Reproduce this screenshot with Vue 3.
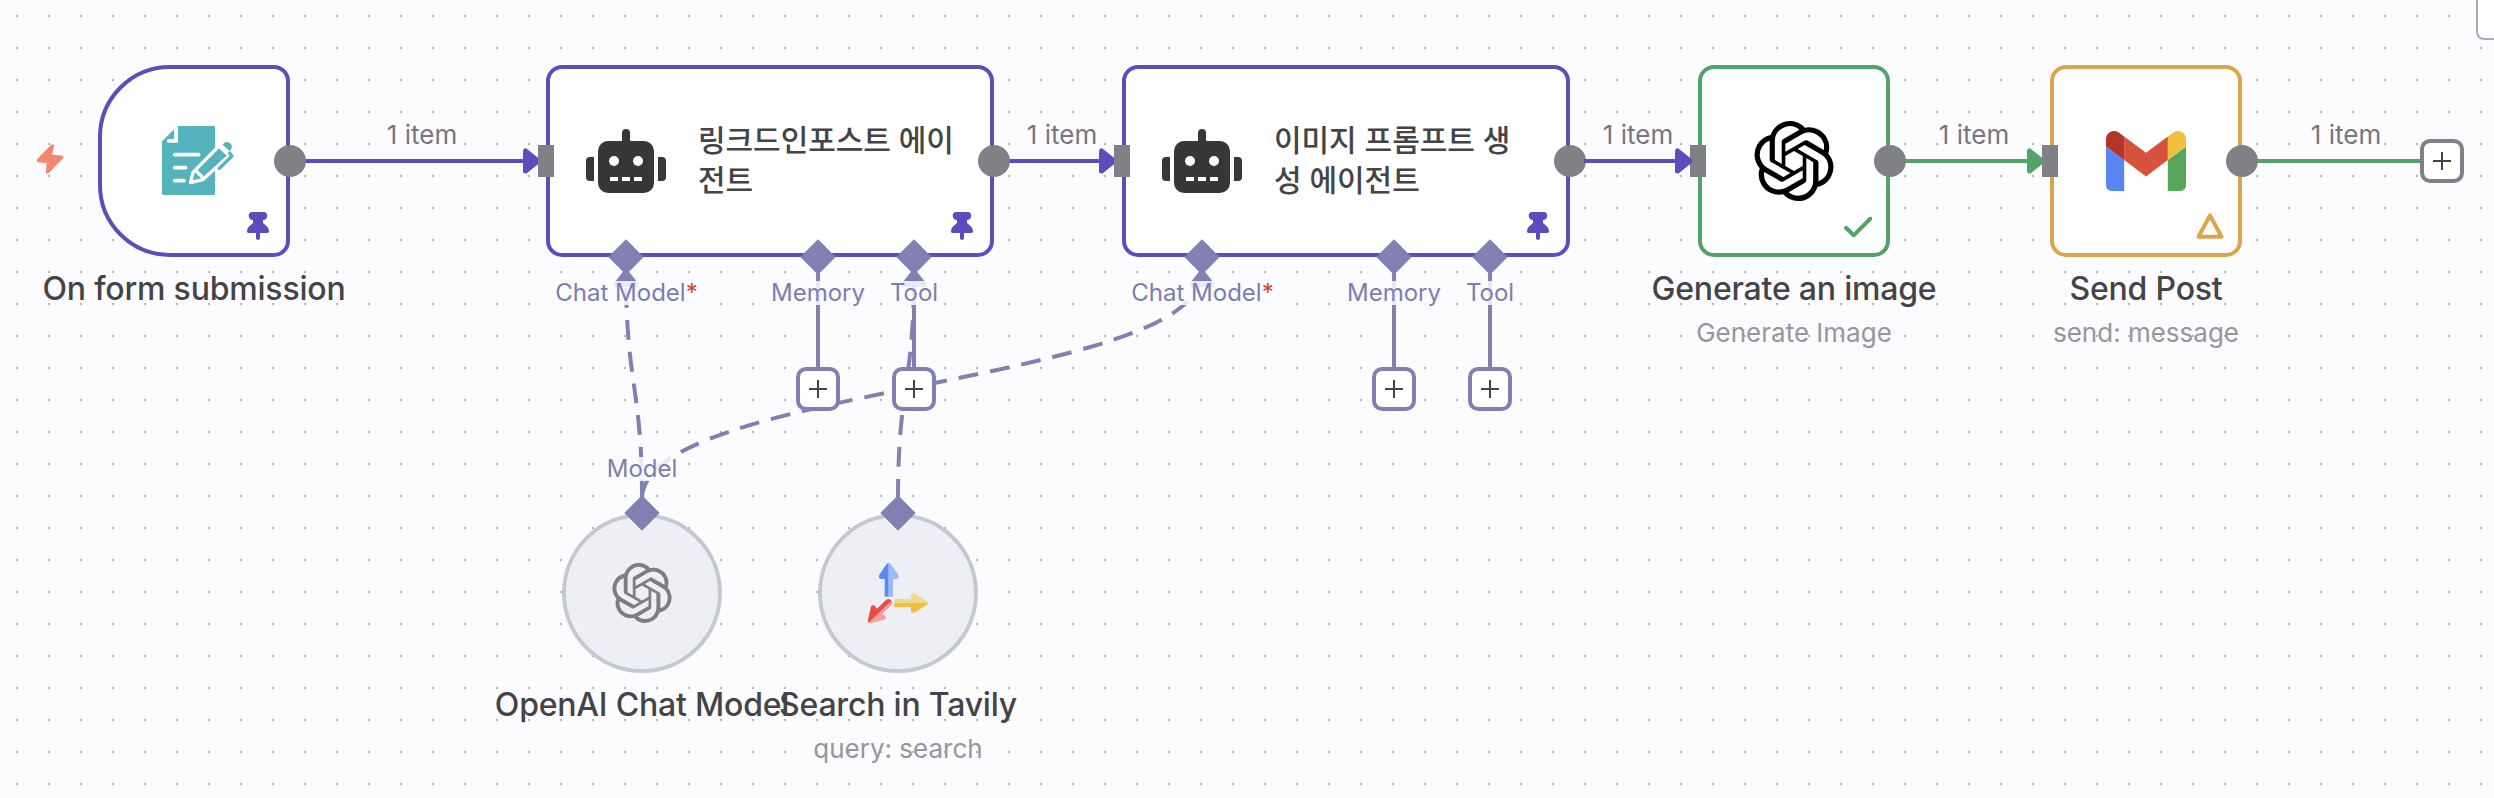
<script setup>
const logo =
  'M22.2819 9.8211a5.9847 5.9847 0 0 0-.5157-4.9108 6.0462 6.0462 0 0 0-6.5098-2.9A6.0651 6.0651 0 0 0 4.9807 4.1818a5.9847 5.9847 0 0 0-3.9977 2.9 6.0462 6.0462 0 0 0 .7427 7.0966 5.98 5.98 0 0 0 .511 4.9107 6.051 6.051 0 0 0 6.5146 2.9001A5.9847 5.9847 0 0 0 13.2599 24a6.0557 6.0557 0 0 0 5.7718-4.2058 5.9894 5.9894 0 0 0 3.9977-2.9001 6.0557 6.0557 0 0 0-.7475-7.0729zm-9.022 12.6081a4.4755 4.4755 0 0 1-2.8764-1.0408l.1419-.0804 4.7783-2.7582a.7948.7948 0 0 0 .3927-.6813v-6.7369l2.02 1.1686a.071.071 0 0 1 .038.052v5.5826a4.504 4.504 0 0 1-4.4945 4.4944zm-9.6607-4.1254a4.4708 4.4708 0 0 1-.5346-3.0137l.142.0852 4.783 2.7582a.7712.7712 0 0 0 .7806 0l5.8428-3.3685v2.3324a.0804.0804 0 0 1-.0332.0615L9.74 19.9502a4.4992 4.4992 0 0 1-6.1408-1.6464zM2.3408 7.8956a4.485 4.485 0 0 1 2.3655-1.9728V11.6a.7664.7664 0 0 0 .3879.6765l5.8144 3.3543-2.0201 1.1685a.0757.0757 0 0 1-.071 0l-4.8303-2.7865A4.504 4.504 0 0 1 2.3408 7.872zm16.5963 3.8558L13.1038 8.364 15.1192 7.2a.0757.0757 0 0 1 .071 0l4.8303 2.7913a4.4944 4.4944 0 0 1-.6765 8.1042v-5.6772a.79.79 0 0 0-.407-.667zm2.0107-3.0231l-.142-.0852-4.7735-2.7818a.7759.7759 0 0 0-.7854 0L9.409 9.2297V6.8974a.0662.0662 0 0 1 .0284-.0615l4.8303-2.7866a4.4992 4.4992 0 0 1 6.6802 4.66zM8.3065 12.863l-2.02-1.1638a.0804.0804 0 0 1-.038-.0567V6.0742a4.4992 4.4992 0 0 1 7.3757-3.4537l-.142.0805L8.704 5.459a.7948.7948 0 0 0-.3927.6813zm1.0976-2.3654l2.602-1.4998 2.6069 1.4998v2.9994l-2.5974 1.4997-2.6067-1.4997Z'

const edges = [
  { from: 290, to: 538, tone: 'pinned', label: 422 },
  { from: 994, to: 1114, tone: 'pinned', label: 1062 },
  { from: 1570, to: 1690, tone: 'pinned', label: 1638 },
  { from: 1890, to: 2042, tone: 'success', label: 1974 },
  { from: 2242, to: 2420, tone: 'success', label: 2346, open: true },
]

const agents = [
  { x: 546, lines: ['링크드인포스트 에이', '전트'] },
  { x: 1122, lines: ['이미지 프롬프트 생', '성 에이전트'] },
]

const links = [
  { from: 642, to: 626 },
  { from: 642, to: 1202 },
  { from: 898, to: 914 },
]
const linkPath = (l) => `M${l.from} 499C${l.from} 385.5 ${l.to} 385.5 ${l.to} 272`

const slots = [
  { dx: 272, name: 'Memory' },
  { dx: 368, name: 'Tool' },
]

const captions = [
  { x: 194, y: 269, title: 'On form submission' },
  { x: 1794, y: 269, title: 'Generate an image', sub: 'Generate Image' },
  { x: 2146, y: 269, title: 'Send Post', sub: 'send: message' },
  { x: 642, y: 685, title: 'OpenAI Chat Model' },
  { x: 898, y: 685, title: 'Search in Tavily', sub: 'query: search' },
]

const outputs = [290, 994, 1570, 1890, 2242]
const inputs = [538, 1114, 1690, 2042]
const diamonds = [
  [626, 257], [818, 257], [914, 257],
  [1202, 257], [1394, 257], [1490, 257],
  [642, 513], [898, 513],
]
</script>

<template>
  <main class="canvas">
    <svg class="layer" width="2494" height="798">
      <g v-for="e in edges" :key="e.from" :class="e.tone">
        <path class="line" :d="`M${e.from} 161H${e.to}`" />
      </g>
      <path v-for="l in links" :key="l.to" class="link" :d="linkPath(l)" />
      <g v-for="a in agents" :key="a.x">
        <path v-for="s in slots" :key="s.dx" class="stem" :d="`M${a.x + s.dx} 257V368`" />
      </g>
      <path
        v-for="l in links"
        :key="'h' + l.to"
        class="link-head"
        :d="`M${l.to} 272l-10 12.5h20z`"
      />
    </svg>

    <section class="node trigger pinned">
      <svg class="form-icon" viewBox="0 0 300 300" width="100" height="100">
        <path
          class="teal"
          d="M84 48H191a4 4 0 0 1 4 4V250a5 5 0 0 1-5 5H41a5 5 0 0 1-5-5V94L72 58V87H56a5.5 5.5 0 0 0 0 11H84Z"
        />
        <path class="rule" d="M74 134H146M74 173H107M74 212H102" />
        <path class="pencil" d="M122 218L129 187L207 108L237 137L158 209Z" />
        <path class="nib" d="M137 182L155 199" />
        <path class="teal" d="M218 104C226 92 238 95 243 103C248 111 245 118 239 123Z" />
        <path class="clip" d="M239 129L246 138L208 175" />
      </svg>
    </section>

    <section
      v-for="a in agents"
      :key="a.x"
      class="node agent pinned"
      :style="{ left: a.x + 'px' }"
    >
      <svg class="robot" viewBox="0 0 80 64" width="80" height="64">
        <path
          d="M36 12V4a4 4 0 0 1 8 0V12H58a10 10 0 0 1 10 10V54a10 10 0 0 1-10 10H22a10 10 0 0 1-10-10V22a10 10 0 0 1 10-10ZM8 28V52H4a4 4 0 0 1-4-4V32a4 4 0 0 1 4-4ZM72 28h4a4 4 0 0 1 4 4V48a4 4 0 0 1-4 4H72Z"
        />
        <g class="face">
          <circle cx="28" cy="32" r="5" />
          <circle cx="52" cy="32" r="5" />
          <path d="M24 48h8v4h-8zM36 48h8v4h-8zM48 48h8v4h-8z" />
        </g>
      </svg>
      <div class="agent-title">
        <div v-for="t in a.lines" :key="t">{{ t }}</div>
      </div>
    </section>

    <section class="node image success">
      <svg viewBox="0 0 24 24" width="80" height="80"><path :d="logo" /></svg>
      <svg class="status" viewBox="0 0 28 20" width="28" height="20">
        <path d="M2 10.8L9.7 18.3L26.5 1.5" />
      </svg>
    </section>

    <section class="node mail warning">
      <svg viewBox="52 42 88 66" width="80" height="60">
        <path fill="#5985f0" d="M58 108h14V74L52 59v43c0 3.32 2.69 6 6 6" />
        <path fill="#5aa55c" d="M120 108h14c3.32 0 6-2.69 6-6V59l-20 15" />
        <path fill="#efbf3d" d="M120 48v26l20-15v-8c0-7.42-8.47-11.65-14.4-7.2" />
        <path fill="#d6523c" d="M72 74V48l24 18 24-18v26L96 92" />
        <path fill="#b33528" d="M52 51v8l20 15V48l-5.6-4.2c-5.94-4.45-14.4-.22-14.4 7.2" />
      </svg>
      <svg class="status" viewBox="0 0 28 26" width="28" height="26">
        <path d="M14 2.4L25.5 23.7H2.5Z" />
      </svg>
    </section>

    <section class="node round openai">
      <svg viewBox="0 0 24 24" width="60" height="60"><path fill="#7d7e82" :d="logo" /></svg>
    </section>
    <section class="node round tavily">
      <svg class="tavily-icon" viewBox="0 0 330 300" width="110" height="100">
        <path fill="#5b88fa" d="M146 68Q141 69 138 74L119 103Q112 116 124 117H134V170H146Z" />
        <path fill="#9cbaf7" d="M146 68Q151 69 154 74L174 103Q180 116 168 117H159V170H146Z" />
        <path fill="#f0d88c" d="M163 189V177H213V167Q215 156 225 161L260 183Q264 186 264 189Z" />
        <path fill="#f0be3c" d="M163 189V201H213V211Q215 222 225 217L260 195Q264 192 264 189Z" />
        <path fill="#ea4c3f" d="M155 183L86 248Q82 245 84 240L93 200Q98 191 105 199L111 206L138 180Q148 172 155 183Z" />
        <path fill="#f2a09f" d="M155 183L86 248Q92 250 97 248L132 239Q143 233 135 227L127 221L154 196Q161 189 155 183Z" />
      </svg>
    </section>

    <svg class="layer" width="2494" height="798">
      <g v-for="x in [258, 962, 1538]" :key="x" :transform="`translate(${x - 11} 212)`">
        <path
          class="pin"
          d="M5 0H17C21.5 0 21.5 8 16 8V11C18 13 22 15 22 19.5Q22 21 20 21H13V26.5Q11 29.5 9 26.5V21H2Q0 21 0 19.5C0 15 4 13 6 11V8C.5 8 .5 0 5 0Z"
        />
      </g>
      <path class="bolt" d="M52.3 146L38.3 160.5L48.5 161.8L47.5 171.8L61.6 157.2L50 156.2Z" />
      <circle v-for="x in outputs" :key="x" class="port" :cx="x" cy="161" r="16" />
      <rect class="port" x="1690" y="145" width="16" height="32" />
      <template v-for="e in edges" :key="e.to">
        <path
          v-if="!e.open"
          :class="['head', e.tone]"
          :d="`M${e.to} 161l-12.5-10v20z`"
        />
      </template>
      <rect
        v-for="x in inputs.filter((v) => v !== 1690)"
        :key="x"
        class="port"
        :x="x"
        y="145"
        width="16"
        height="32"
      />
      <path class="over" d="M1584 161H1600" />
      <path
        v-for="d in diamonds"
        :key="d.join()"
        class="diamond"
        :d="`M${d[0]} ${d[1] - 17.7}l17.7 17.7l-17.7 17.7l-17.7-17.7z`"
      />
    </svg>

    <template v-for="a in agents" :key="'l' + a.x">
      <span class="slot-label" :style="{ left: a.x + 80.5 + 'px' }">Chat Model<i>*</i></span>
      <span
        v-for="s in slots"
        :key="s.name"
        class="slot-label"
        :style="{ left: a.x + s.dx + 'px' }"
      >{{ s.name }}</span>
      <button
        v-for="s in slots"
        :key="'b' + s.name"
        class="plus slot-plus"
        :style="{ left: a.x + s.dx - 22 + 'px' }"
      ></button>
    </template>
    <span class="slot-label model">Model</span>
    <button class="plus end-plus"></button>

    <span
      v-for="e in edges"
      :key="'t' + e.from"
      class="edge-label"
      :style="{ left: e.label + 'px' }"
    >1 item</span>

    <div
      v-for="c in captions"
      :key="c.title"
      class="caption"
      :style="{ left: c.x + 'px', top: c.y + 'px' }"
    >
      <div class="title">{{ c.title }}</div>
      <div v-if="c.sub" class="sub">{{ c.sub }}</div>
    </div>

    <div class="control"></div>
  </main>
</template>

<style scoped>
.canvas {
  position: relative;
  width: 2494px;
  height: 798px;
  overflow: hidden;
  font-family: Inter, 'Noto Sans CJK KR', sans-serif;
  background: conic-gradient(from 90deg at 30px 30px, #b2b2b7 90deg, #fcfcff 0) -14px -15px / 32px 32px;
}
.layer {
  position: absolute;
  inset: 0;
}
.pinned { --tone: #5c4dbd; }
.success { --tone: #52a36a; }
.warning { --tone: #dca54c; }
.line { stroke: var(--tone); stroke-width: 4; fill: none; }
.head {
  fill: var(--tone);
  stroke: var(--tone);
  stroke-width: 5;
  stroke-linejoin: round;
}
.over { stroke: #5c4dbd; stroke-width: 4; }
.link {
  fill: none;
  stroke: #8080b3;
  stroke-width: 4;
  stroke-dasharray: 20 12;
}
.link-head {
  fill: #8080b3;
  stroke: #8080b3;
  stroke-width: 5;
  stroke-linejoin: round;
}
.stem { stroke: #8080b3; stroke-width: 4; }
.port { fill: #808186; }
.diamond { fill: #8080b3; }
.pin { fill: #5c4dbd; }
.bolt {
  fill: #f08872;
  stroke: #f08872;
  stroke-width: 3.4;
  stroke-linejoin: round;
}

.node {
  position: absolute;
  top: 65px;
  width: 192px;
  height: 192px;
  box-sizing: border-box;
  border: 4px solid var(--tone);
  border-radius: 16px;
  background: #fff;
  display: flex;
  align-items: center;
  justify-content: center;
}
.trigger {
  left: 98px;
  border-radius: 72px 16px 16px 72px;
}
.form-icon { margin: -2px 0 0 12px; }
.teal { fill: #54b3bc; }
.rule { stroke: #fff; stroke-width: 11; stroke-linecap: round; }
.pencil {
  fill: #54b3bc;
  stroke: #fff;
  stroke-width: 10;
  stroke-linejoin: round;
}
.nib { stroke: #fff; stroke-width: 10; stroke-linecap: round; }
.clip {
  fill: none;
  stroke: #54b3bc;
  stroke-width: 10;
  stroke-linecap: round;
  stroke-linejoin: round;
}
.agent {
  width: 448px;
  justify-content: flex-start;
  padding-left: 36px;
  gap: 32px;
}
.robot { fill: #373737; }
.face { fill: #fff; }
.agent-title {
  margin-top: -3px;
  font-size: 30px;
  font-weight: 500;
  line-height: 40px;
  letter-spacing: -0.05px;
  color: #444446;
  white-space: nowrap;
}
.image { left: 1698px; }
.mail { left: 2050px; }
.status {
  position: absolute;
  right: 14px;
  fill: none;
  stroke: var(--tone);
  stroke-width: 4;
  stroke-linecap: round;
  stroke-linejoin: round;
}
.image .status { bottom: 16px; }
.mail .status { bottom: 14px; }
.round {
  --tone: #c4c8d4;
  top: 513px;
  width: 160px;
  height: 160px;
  border-radius: 50%;
  background: #eeeff5;
}
.openai { left: 562px; }
.tavily { left: 818px; }
.tavily-icon { margin: -6px 0 0 -6px; }

.slot-label {
  position: absolute;
  top: 281px;
  transform: translateX(-50%);
  font-size: 24px;
  line-height: 24px;
  color: #7c7cb2;
  white-space: nowrap;
  background: rgba(252, 252, 255, 0.85);
}
.slot-label i {
  font-style: normal;
  color: #dc3a32;
}
.model { left: 642px; top: 457px; }
.plus {
  position: absolute;
  width: 44px;
  height: 44px;
  padding: 0;
  border: 4px solid #8080b3;
  border-radius: 10px;
  background:
    linear-gradient(#444, #444) center / 18px 2px no-repeat,
    linear-gradient(#444, #444) center / 2px 18px no-repeat,
    #fff;
}
.slot-plus { top: 367px; }
.end-plus { left: 2420px; top: 139px; border-color: #808186; }
.edge-label {
  position: absolute;
  top: 119px;
  transform: translateX(-50%);
  font-size: 26px;
  line-height: 32px;
  color: #75767b;
  white-space: nowrap;
  background: rgba(252, 252, 255, 0.85);
}
.caption {
  position: absolute;
  transform: translateX(-50%);
  text-align: center;
  white-space: nowrap;
}
.title {
  font-size: 32px;
  font-weight: 500;
  line-height: 40px;
  letter-spacing: -0.2px;
  color: #444446;
}
.sub {
  margin-top: 8px;
  font-size: 26px;
  line-height: 32px;
  color: #95969c;
}
.control {
  position: absolute;
  left: 2476px;
  top: -40px;
  width: 80px;
  height: 80px;
  box-sizing: border-box;
  border: 2px solid #a8aabc;
  border-radius: 8px;
  background: #fff;
}
</style>
